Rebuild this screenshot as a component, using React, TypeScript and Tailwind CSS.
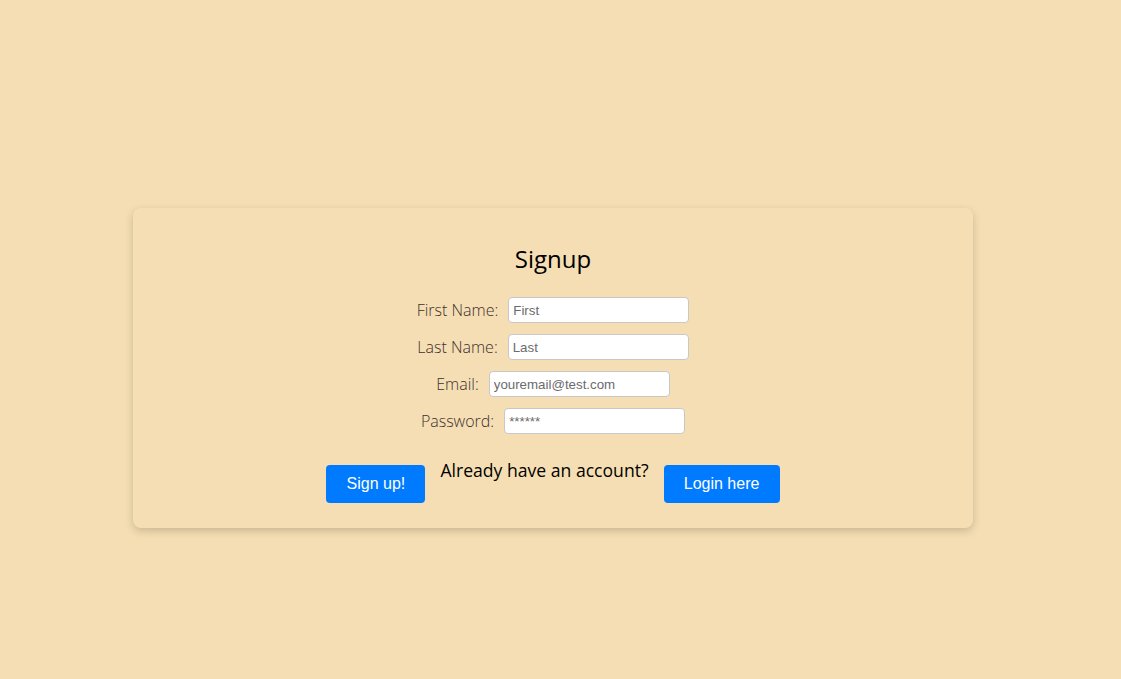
export default function App() {
  const rows = [
    { label: "First Name:", placeholder: "First", type: "text" },
    { label: "Last Name:", placeholder: "Last", type: "text" },
    { label: "Email:", placeholder: "youremail@test.com", type: "email" },
    { label: "Password:", placeholder: "******", type: "text" },
  ];

  return (
    <div className="min-h-[679px] w-full bg-[#f5deb3] pt-[208px] font-['Open_Sans',sans-serif]">
      <div className="ml-[133px] w-[840px] rounded-lg bg-[#f5deb3] pt-[35px] pb-[25px] shadow-[0_3px_8px_rgba(0,0,0,0.18)]">
        <h1 className="text-center text-[24px] leading-[32px] text-black">Signup</h1>

        <form className="mt-[22px] flex flex-col items-center gap-[11px]">
          {rows.map((row) => (
            <div key={row.label} className="flex items-center gap-[10px]">
              <label className="text-[16px] font-light text-[#3f3030]">{row.label}</label>
              <input
                type={row.type}
                placeholder={row.placeholder}
                className="h-[26px] w-[181px] rounded-[4px] border border-[#c8c8c8] bg-white px-[4px] font-['Liberation_Sans',Arial,sans-serif] text-[13.3px] text-[#444] placeholder:text-[#6b6b6b] outline-none"
              />
            </div>
          ))}

          <div className="mt-[15px] flex items-start justify-center gap-[15px]">
            <button
              type="button"
              className="mt-[5px] h-[38px] w-[99px] rounded-[4px] bg-[#007bff] font-['Liberation_Sans',Arial,sans-serif] text-[16px] text-white"
            >
              Sign up!
            </button>
            <p className="text-[17.6px] leading-[20px] text-black">Already have an account?</p>
            <button
              type="button"
              className="mt-[5px] h-[38px] w-[116px] rounded-[4px] bg-[#007bff] font-['Liberation_Sans',Arial,sans-serif] text-[16px] text-white"
            >
              Login here
            </button>
          </div>
        </form>
      </div>
    </div>
  );
}
